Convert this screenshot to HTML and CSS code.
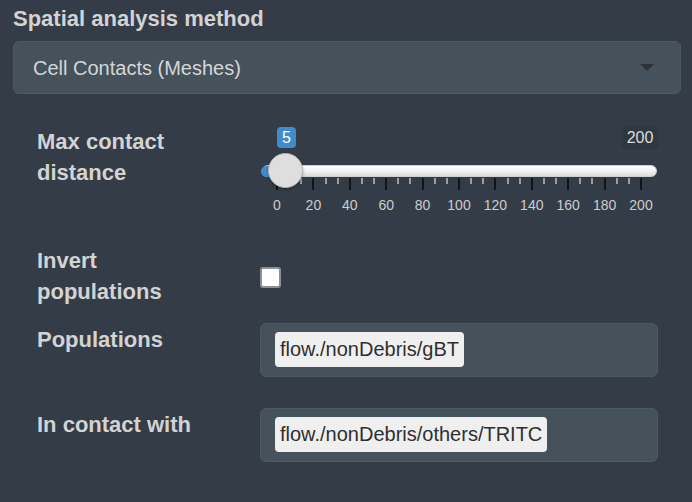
FILE: index.html
```html
<!DOCTYPE html>
<html>
<head>
<meta charset="utf-8">
<link rel="stylesheet" href="styles.css">
</head>
<body>
<div class="page">
  <div class="heading">Spatial analysis method</div>
  <div class="select">
    <span class="select-text">Cell Contacts (Meshes)</span>
    <span class="caret"></span>
  </div>
  <div class="form">
    <div class="row row-slider">
      <div class="label">Max contact<br>distance</div>
      <div class="control">
        <div class="slider">
          <span class="val-label">5</span>
          <span class="max-label">200</span>
          <span class="track"></span>
          <span class="bar"></span>
          <div class="grid">
            <span class="tick major" style="left:0px"></span>
            <span class="tick minor" style="left:12.13px"></span>
            <span class="tick minor" style="left:24.27px"></span>
            <span class="tick major" style="left:36.4px"></span>
            <span class="tick minor" style="left:48.53px"></span>
            <span class="tick minor" style="left:60.67px"></span>
            <span class="tick major" style="left:72.8px"></span>
            <span class="tick minor" style="left:84.93px"></span>
            <span class="tick minor" style="left:97.07px"></span>
            <span class="tick major" style="left:109.2px"></span>
            <span class="tick minor" style="left:121.33px"></span>
            <span class="tick minor" style="left:133.47px"></span>
            <span class="tick major" style="left:145.6px"></span>
            <span class="tick minor" style="left:157.73px"></span>
            <span class="tick minor" style="left:169.87px"></span>
            <span class="tick major" style="left:182px"></span>
            <span class="tick minor" style="left:194.13px"></span>
            <span class="tick minor" style="left:206.27px"></span>
            <span class="tick major" style="left:218.4px"></span>
            <span class="tick minor" style="left:230.53px"></span>
            <span class="tick minor" style="left:242.67px"></span>
            <span class="tick major" style="left:254.8px"></span>
            <span class="tick minor" style="left:266.93px"></span>
            <span class="tick minor" style="left:279.07px"></span>
            <span class="tick major" style="left:291.2px"></span>
            <span class="tick minor" style="left:303.33px"></span>
            <span class="tick minor" style="left:315.47px"></span>
            <span class="tick major" style="left:327.6px"></span>
            <span class="tick minor" style="left:339.73px"></span>
            <span class="tick minor" style="left:351.87px"></span>
            <span class="tick major" style="left:364px"></span>
            <span class="num" style="left:0px">0</span>
            <span class="num" style="left:36.4px">20</span>
            <span class="num" style="left:72.8px">40</span>
            <span class="num" style="left:109.2px">60</span>
            <span class="num" style="left:145.6px">80</span>
            <span class="num" style="left:182px">100</span>
            <span class="num" style="left:218.4px">120</span>
            <span class="num" style="left:254.8px">140</span>
            <span class="num" style="left:291.2px">160</span>
            <span class="num" style="left:327.6px">180</span>
            <span class="num" style="left:364px">200</span>
          </div>
          <span class="thumb"></span>
        </div>
      </div>
    </div>
    <div class="row row-check">
      <div class="label">Invert<br>populations</div>
      <div class="control">
        <span class="checkbox"></span>
      </div>
    </div>
    <div class="row row-pop">
      <div class="label label-input">Populations</div>
      <div class="control">
        <div class="input"><span class="tag">flow./nonDebris/gBT</span></div>
      </div>
    </div>
    <div class="row row-contact">
      <div class="label label-input">In contact with</div>
      <div class="control">
        <div class="input"><span class="tag">flow./nonDebris/others/TRITC</span></div>
      </div>
    </div>
  </div>
</div>
</body>
</html>
```

FILE: styles.css
```css
html, body {
  margin: 0;
  padding: 0;
  background: #343d47;
}
body {
  font-family: "Liberation Sans", Arial, Helvetica, sans-serif;
  color: #d3d3d3;
  width: 692px;
  height: 502px;
  overflow: hidden;
}
.page {
  padding: 6px 11px 0 13px;
}
.heading {
  font-size: 22px;
  font-weight: bold;
  line-height: 25px;
  color: #d3d3d3;
}
.select {
  margin-top: 10px;
  height: 53px;
  box-sizing: border-box;
  background: #45515b;
  border: 1px solid #4c5862;
  border-radius: 6px;
  display: flex;
  align-items: center;
  justify-content: space-between;
  padding: 2px 26px 0 19px;
}
.select-text {
  font-size: 20px;
  line-height: 23px;
  color: #d6d6d6;
}
.caret {
  width: 0;
  height: 0;
  border-left: 7px solid transparent;
  border-right: 7px solid transparent;
  border-top: 7px solid #2e3236;
  margin-top: -2px;
}
.form {
  padding-left: 24px;
}
.row {
  display: flex;
}
.label {
  width: 223px;
  flex: none;
  font-size: 22px;
  font-weight: bold;
  line-height: 31px;
  color: #d3d3d3;
}
.label-input {
  padding-top: 1px;
}
.control {
  width: 398px;
  flex: none;
}
.row-slider {
  margin-top: 32px;
  height: 119px;
}
.row-check {
  height: 78px;
}
.row-pop {
  height: 85px;
}
.row-contact {
  height: 54px;
}
.slider {
  position: relative;
  width: 398px;
  height: 100px;
}
.val-label {
  position: absolute;
  left: 17px;
  top: 1px;
  width: 19px;
  height: 21px;
  background: #428bca;
  border-radius: 4px;
  color: #fff;
  font-size: 16px;
  line-height: 21px;
  text-align: center;
}
.max-label {
  position: absolute;
  left: 362px;
  top: 0;
  width: 36px;
  height: 23px;
  background: #2f3741;
  border-radius: 4px;
  color: #dcdcdc;
  font-size: 16px;
  line-height: 23px;
  text-align: center;
}
.track {
  position: absolute;
  left: 2px;
  top: 39px;
  width: 395px;
  height: 12px;
  box-sizing: border-box;
  border-radius: 6px;
  background: linear-gradient(to bottom, #ffffff 0%, #f2f2f2 50%, #dcdcdc 100%);
  border: 1px solid #cfcfcf;
}
.bar {
  position: absolute;
  left: 1px;
  top: 40px;
  width: 24px;
  height: 11px;
  background: #428bca;
  border-radius: 6px 0 0 6px;
}
.thumb {
  position: absolute;
  left: 8px;
  top: 27px;
  width: 35px;
  height: 35px;
  box-sizing: border-box;
  border-radius: 50%;
  background: #dedede;
  border: 1px solid #b8b8b8;
  box-shadow: 0 1px 3px rgba(0, 0, 0, 0.35);
}
.grid {
  position: absolute;
  left: 17px;
  top: 52px;
  width: 364px;
  height: 40px;
}
.tick {
  position: absolute;
  top: 0;
  transform: translateX(-50%);
}
.tick.major {
  width: 2px;
  height: 12px;
  background: #111418;
}
.tick.minor {
  width: 2px;
  height: 6px;
  background: #9a9ea3;
}
.num {
  position: absolute;
  top: 19px;
  transform: translateX(-50%);
  font-size: 14px;
  line-height: 16px;
  color: #cccccc;
  white-space: nowrap;
}
.checkbox {
  display: block;
  margin-top: 22px;
  width: 21px;
  height: 21px;
  box-sizing: border-box;
  background: #ffffff;
  border: 2px solid #8d8f99;
  border-radius: 3px;
}
.input {
  height: 54px;
  box-sizing: border-box;
  background: #45515b;
  border: 1px solid #4c5862;
  border-radius: 6px;
  padding: 8px 0 0 14px;
  display: flex;
  align-items: flex-start;
}
.tag {
  height: 35px;
  box-sizing: border-box;
  background: #efefef;
  border-radius: 4px;
  color: #2f2f2f;
  font-size: 20px;
  line-height: 35px;
  padding: 0 5px;
  white-space: nowrap;
}
```
